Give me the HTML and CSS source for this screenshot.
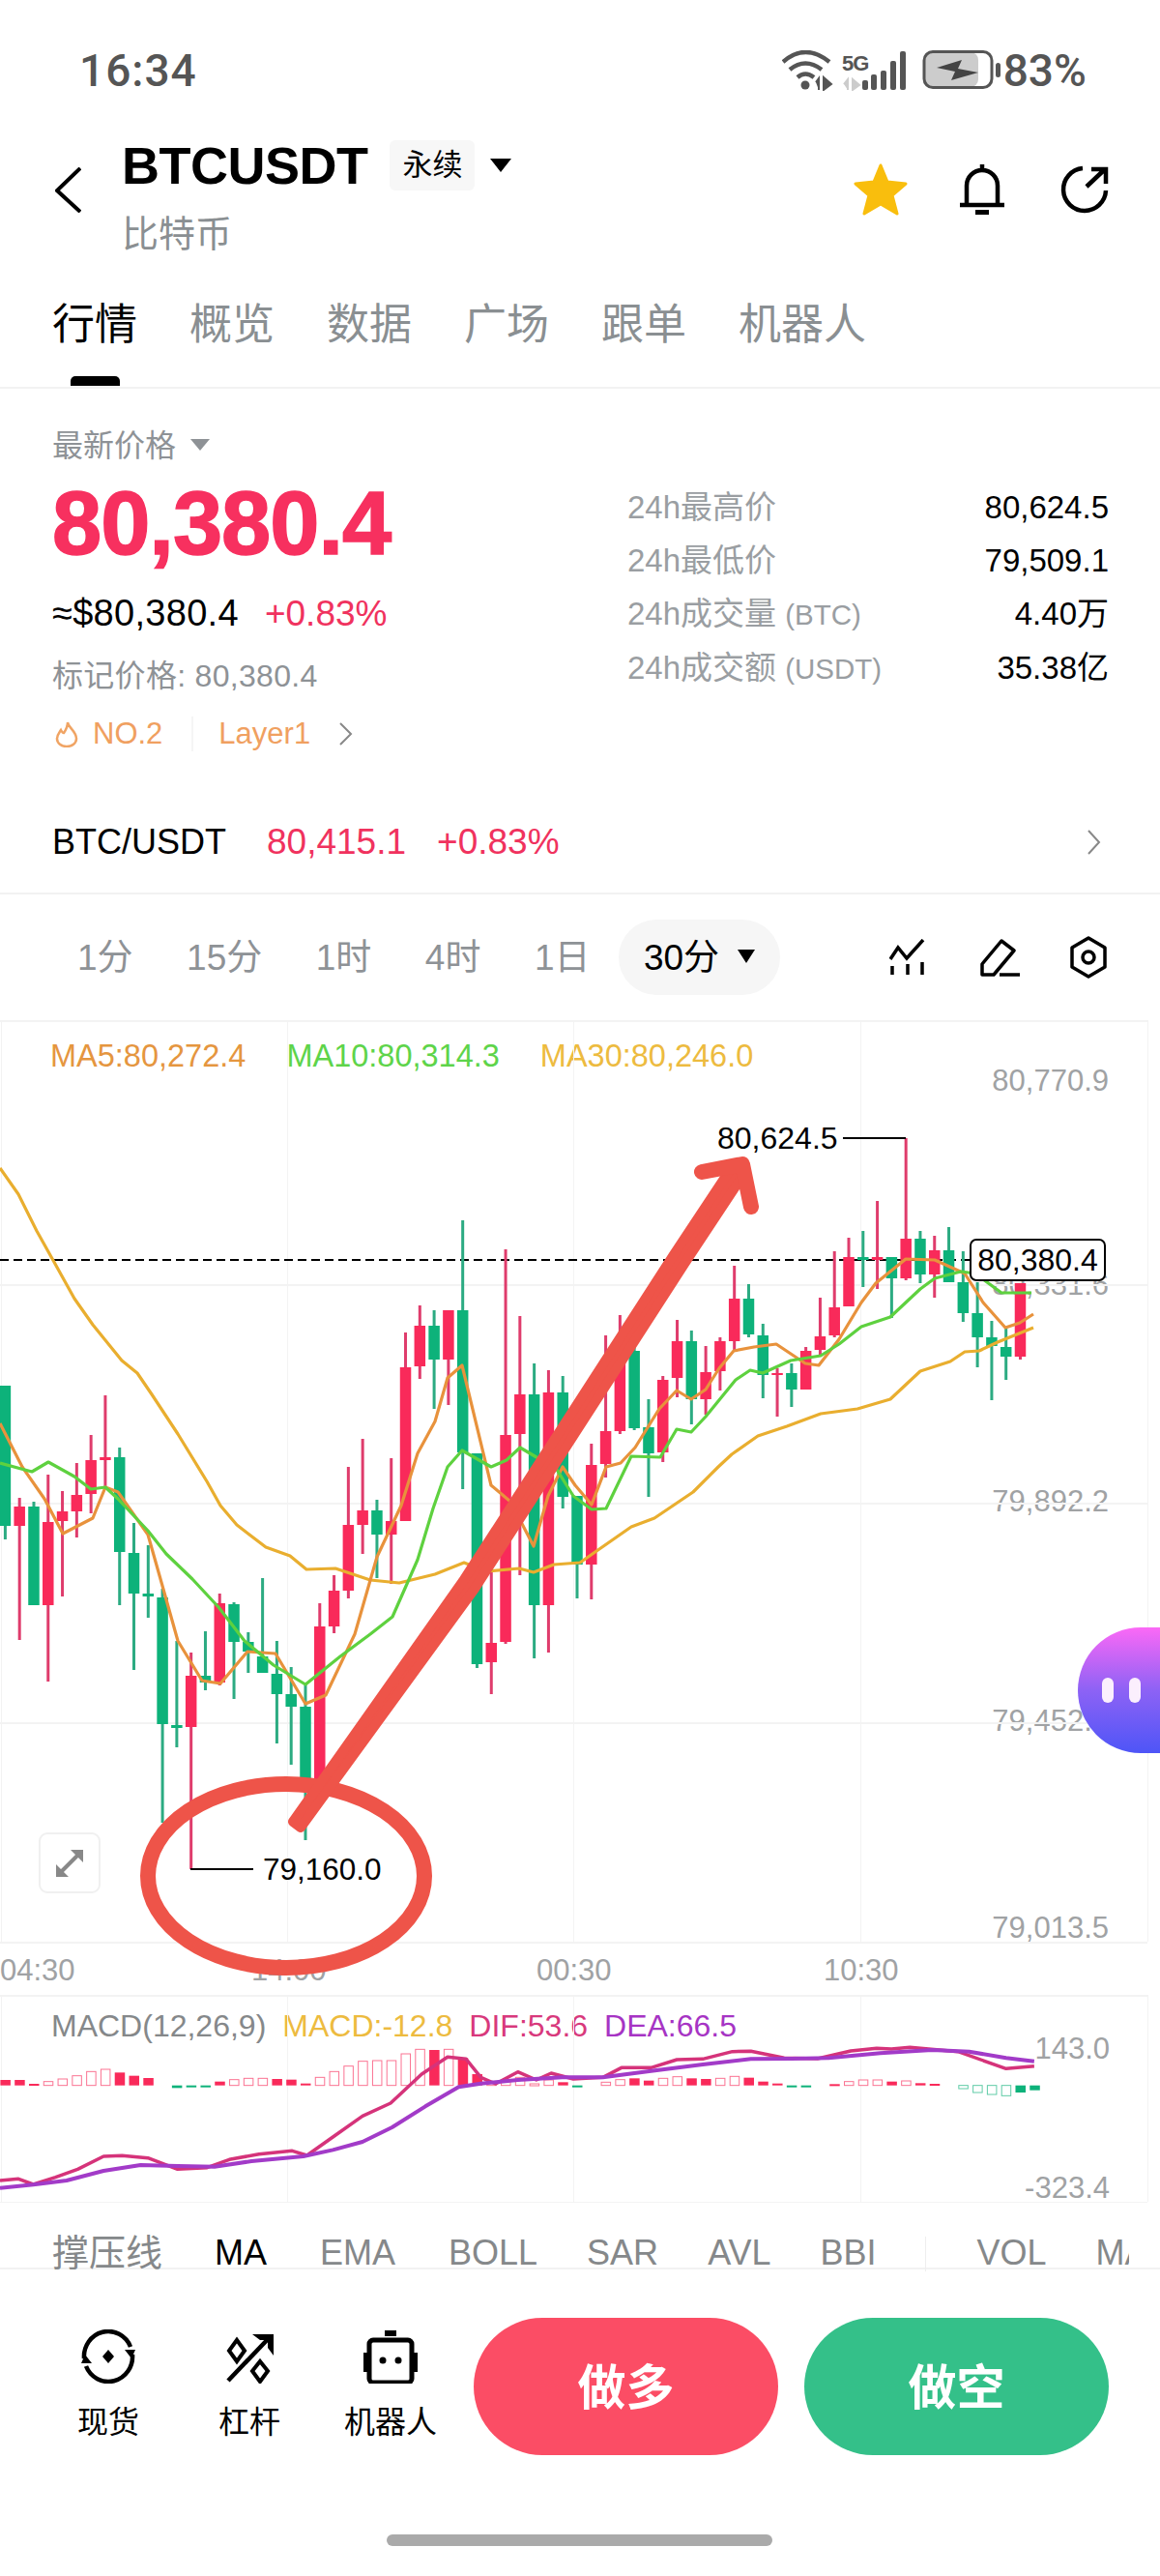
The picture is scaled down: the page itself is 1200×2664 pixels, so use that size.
FILE: index.html
```html
<!DOCTYPE html>
<html lang="zh-CN">
<head>
    <meta charset="UTF-8">
    <meta name="viewport" content="width=device-width, initial-scale=1.0">
    <title>BTCUSDT</title>
    <link rel="stylesheet" href="styles.css">
</head>
<body>
    <div class="status-bar">
        <span class="clock">16:34</span>
        <svg class="status-icons" width="228" height="42" viewBox="807 52 228 42">
            <g fill="none" stroke="#555" stroke-width="4.5">
                <path d="M808 64 Q831 44 856 64"/>
                <path d="M815 72 Q831 59 848 72"/>
                <path d="M823 80 Q831 73 840 80"/>
            </g>
            <circle cx="831" cy="88" r="4.5" fill="#555"/>
            <path d="M845 93V81l-3 4M850 80v13l8-6z" fill="#555" stroke="#555" stroke-width="2"/>
            <text class="net-label" x="869" y="73">5G</text>
            <path d="M875 93V82l-4 5M880 82v11l7-5z" fill="#ccc" stroke="#ccc" stroke-width="2"/>
            <g fill="#555">
                <rect x="890" y="83" width="6" height="10" rx="2"/>
                <rect x="899" y="77" width="6" height="16" rx="2"/>
                <rect x="909" y="73" width="6" height="20" rx="2"/>
                <rect x="919" y="63" width="6" height="30" rx="2"/>
                <rect x="929" y="53" width="6" height="40" rx="2"/>
            </g>
            <rect x="955" y="54" width="55" height="36" rx="8" fill="#ccc"/>
            <rect x="954" y="53.500" width="70" height="37" rx="9" fill="none" stroke="#555" stroke-width="3"/>
            <path d="M967 70 L993 62 L989 71 L1010 75 L982 83 L986 74z" fill="#444"/>
            <rect x="1028" y="65" width="5" height="15" rx="2.500" fill="#555"/>
        </svg>
        <span class="battery-pct">83%</span>
    </div>

    <header class="coin-head">
        <svg class="back-icon" width="27" height="47" viewBox="0 0 27 47">
            <path d="M26 1 L2 24 L26 46" fill="none" stroke="#000" stroke-width="4"/>
        </svg>
        <div class="coin-title">
            <div class="coin-name-row">
                <h1>BTCUSDT</h1>
                <span class="coin-badge">永续</span>
                <span class="caret caret-black"></span>
            </div>
            <div class="coin-sub">比特币</div>
        </div>
        <div class="head-actions">
            <svg class="head-star" width="56" height="56" viewBox="0 0 56 56">
                <path d="M28 3 L35 20 L54 22 L40 34 L45 53 L28 43 L11 53 L16 34 L2 22 L21 20z" fill="#f9be0d" stroke="#f9be0d" stroke-width="3" stroke-linejoin="round"/>
            </svg>
            <svg width="48" height="54" viewBox="0 0 48 54">
                <path d="M24 1v6M8 43V23a16 16 0 0 1 32 0v20M1 43h46" fill="none" stroke="#000" stroke-width="4.500"/>
                <rect x="17" y="48" width="14" height="5" fill="#000"/>
            </svg>
            <svg width="50" height="50" viewBox="0 0 50 50">
                <path d="M23 3A22 22 0 1 0 47 26" fill="none" stroke="#000" stroke-width="4.500"/>
                <path d="M27 22 L45 5M32 4H47V19" fill="none" stroke="#000" stroke-width="4.500"/>
            </svg>
        </div>
    </header>

    <nav class="tabs">
        <div class="tab tab-active">行情<i class="tab-mark"></i></div>
        <div class="tab">概览</div>
        <div class="tab">数据</div>
        <div class="tab">广场</div>
        <div class="tab">跟单</div>
        <div class="tab">机器人</div>
    </nav>

    <section class="price-panel">
        <div class="price-main">
            <div class="price-label">最新价格 <span class="caret caret-gray"></span></div>
            <div class="price-big">80,380.4</div>
            <div class="price-fiat">≈$80,380.4<span class="rise">+0.83%</span></div>
            <div class="price-mark">标记价格: 80,380.4</div>
            <div class="price-tags">
                <svg width="24" height="28" viewBox="0 0 24 28">
                    <path d="M13 2c1 6 9 9 9 17a10 8 0 0 1-20 0c0-4 2-6 4-9 1 2 2 3 3 3 2-3 4-7 4-11z" fill="none" stroke="#f0a464" stroke-width="2.500"/>
                </svg>
                <span class="tag-rank">NO.2</span>
                <span class="tag-name">Layer1</span>
                <svg width="15" height="24" viewBox="0 0 15 24">
                    <path d="M2 1 L13 12 L2 23" fill="none" stroke="#888" stroke-width="2"/>
                </svg>
            </div>
        </div>
        <dl class="stats">
            <div class="stat"><dt>24h最高价</dt><dd>80,624.5</dd></div>
            <div class="stat"><dt>24h最低价</dt><dd>79,509.1</dd></div>
            <div class="stat"><dt>24h成交量 <span class="stat-unit">(BTC)</span></dt><dd>4.40万</dd></div>
            <div class="stat"><dt>24h成交额 <span class="stat-unit">(USDT)</span></dt><dd>35.38亿</dd></div>
        </dl>
    </section>

    <div class="spot-row">
        <span class="spot-name">BTC/USDT</span>
        <span class="spot-price">80,415.1</span>
        <span class="spot-change">+0.83%</span>
        <svg class="spot-more" width="15" height="26" viewBox="0 0 15 26">
            <path d="M2 1 L13 13 L2 25" fill="none" stroke="#888" stroke-width="2"/>
        </svg>
    </div>

    <div class="intervals">
        <span>1分</span>
        <span>15分</span>
        <span>1时</span>
        <span>4时</span>
        <span>1日</span>
        <span class="interval-pill">30分<i class="caret caret-black caret-small"></i></span>
        <div class="chart-tools">
            <svg class="tool-first" width="38" height="38" viewBox="0 0 38 38">
                <path d="M1 21 L9 9 L18 20 L35 1" fill="none" stroke="#000" stroke-width="3.500"/>
                <path d="M3 28v9M19 26v11M34 24v13" fill="none" stroke="#000" stroke-width="3.500"/>
            </svg>
            <svg width="42" height="40" viewBox="0 0 42 40">
                <path d="M2 38V27L22 3 L35 13 L14 38z" fill="none" stroke="#000" stroke-width="3.500" stroke-linejoin="round"/>
                <path d="M20 38H41" fill="none" stroke="#000" stroke-width="3.500"/>
            </svg>
            <svg width="40" height="44" viewBox="0 0 40 44">
                <path d="M20 2 L37 12V32 L20 42 L3 32V12z" fill="none" stroke="#000" stroke-width="3.500" stroke-linejoin="round"/>
                <circle cx="20" cy="22" r="6" fill="none" stroke="#000" stroke-width="3.500"/>
            </svg>
        </div>
    </div>

    <section class="kline">
        <div class="ma-legend">
            <span class="ma5">MA5:80,272.4</span>
            <span class="ma10">MA10:80,314.3</span>
            <span class="ma30">MA30:80,246.0</span>
        </div>
        <span class="axis-price axis-p1">80,770.9</span>
        <span class="axis-price axis-p2">80,331.6</span>
        <span class="axis-price axis-p3">79,892.2</span>
        <span class="axis-price axis-p4">79,452.8</span>
        <span class="axis-price axis-p5">79,013.5</span>
        <span class="axis-time axis-t1">04:30</span>
        <span class="axis-time axis-t2">14:00</span>
        <span class="axis-time axis-t3">00:30</span>
        <span class="axis-time axis-t4">10:30</span>

        <svg id="kline-chart" class="chart-svg" width="1200" height="1008" viewBox="0 1055 1200 1008">
            <g id="kline-grid"></g>
            <path d="M0 1303H1004" stroke="#000" stroke-width="2" stroke-dasharray="9 5"/>
            <g id="kline-candles"></g>
            <g id="kline-ma"></g>
            <path d="M872 1177H937M197 1933H262" fill="none" stroke="#000" stroke-width="2"/>
            <g class="markup">
                <ellipse cx="296" cy="1940" rx="143" ry="95" stroke-width="16"/>
                <path class="markup-shaft" d="M311 1890 L491 1643 L708 1307 L771 1212 L759 1204 L696 1299 L479 1635 L303 1884z" stroke-width="10"/>
                <path d="M726 1212 L768 1204 L777 1248" stroke-width="16"/>
            </g>
        </svg>

        <span class="extreme extreme-high">80,624.5</span>
        <span class="extreme extreme-low">79,160.0</span>
        <span class="last-price">80,380.4</span>
        <div class="expand-btn">
            <svg width="32" height="32" viewBox="0 0 32 32">
                <path d="M2 30V17l13 13zM30 2V15L17 2z" fill="#888"/>
                <path d="M8 24 L24 8" stroke="#888" stroke-width="4"/>
            </svg>
        </div>
        <div class="assistant"><i></i><i></i></div>
    </section>

    <section class="macd">
        <div class="macd-legend">
            <span class="macd-name">MACD(12,26,9)</span>
            <span class="macd-val">MACD:-12.8</span>
            <span class="macd-dif">DIF:53.6</span>
            <span class="macd-dea">DEA:66.5</span>
        </div>
        <svg id="macd-chart" class="chart-svg" width="1200" height="215" viewBox="0 2063 1200 215"></svg>
        <span class="axis-price axis-m1">143.0</span>
        <span class="axis-price axis-m2">-323.4</span>
    </section>

    <nav class="indicators">
        <span class="ind ind-cjk">撑压线</span>
        <span class="ind ind-on ind-ma">MA</span>
        <span class="ind ind-wide">EMA</span>
        <span class="ind ind-wide">BOLL</span>
        <span class="ind">SAR</span>
        <span class="ind">AVL</span>
        <span class="ind">BBI</span>
        <i class="ind-split"></i>
        <span class="ind">VOL</span>
        <span class="ind">MACD</span>
    </nav>

    <footer class="actions">
        <div class="action">
            <svg width="56" height="56" viewBox="0 0 56 56">
                <path d="M3 30A25 26 0 0 1 51 18M53 26A25 26 0 0 1 5 38" fill="none" stroke="#000" stroke-width="4.500"/>
                <path d="M45 21H56L52 30zM11 35H0L4 26z" fill="#000"/>
                <path d="M28 21 L34 28 L28 35 L22 28z" fill="#000"/>
            </svg>
            <span>现货</span>
        </div>
        <div class="action">
            <svg width="56" height="56" viewBox="0 0 56 56">
                <path d="M6 53 L50 7" fill="none" stroke="#000" stroke-width="4.500"/>
                <path d="M31 5H53V27L47 19V11H39z" fill="#000"/>
                <path d="M15 11 L23 22 L15 33 L7 22z M39 33 L47 43 L39 54 L31 43z" fill="none" stroke="#000" stroke-width="4"/>
            </svg>
            <span>杠杆</span>
        </div>
        <div class="action">
            <svg width="56" height="56" viewBox="0 0 56 56">
                <rect x="22" y="1" width="12" height="6" fill="#000"/>
                <rect x="6" y="11" width="44" height="44" rx="4" fill="none" stroke="#000" stroke-width="5"/>
                <path d="M2 24v20M54 24v20" stroke="#000" stroke-width="4"/>
                <circle cx="20" cy="32" r="3.500" fill="#000"/>
                <circle cx="36" cy="32" r="3.500" fill="#000"/>
            </svg>
            <span>机器人</span>
        </div>
        <button class="trade trade-long">做多</button>
        <button class="trade trade-short">做空</button>
    </footer>

    <div class="home-bar"></div>

    <script src="chart.js"></script>
</body>
</html>
```
FILE: styles.css
```css
body {
    margin: 0;
    width: 1200px;
    height: 2664px;
    overflow: hidden;
    background-color: #fff;
    color: #000;
    font-family: "Liberation Sans", "Noto Sans CJK SC", sans-serif;
}

.caret {
    display: inline-block;
    width: 0;
    height: 0;
    border-style: solid;
    border-color: transparent;
    border-bottom-width: 0;
}

.caret-black {
    border-width: 14px 11px 0;
    border-top-color: #000;
}

.caret-gray {
    border-width: 12px 10px 0;
    border-top-color: #8e9296;
}

.caret-small {
    border-width: 14px 9px 0;
    margin-left: 19px;
}

/* status bar */
.status-bar {
    height: 130px;
    box-sizing: border-box;
    padding: 51px 0 0 82px;
    display: flex;
    align-items: flex-start;
    color: #555;
}

.clock {
    font-family: Roboto, sans-serif;
    font-size: 46px;
    line-height: 44px;
    font-weight: 500;
    letter-spacing: 1px;
}

.status-icons {
    margin: 1px 0 0 605px;
}

.net-label {
    font-size: 22px;
    font-weight: bold;
    fill: #555;
    letter-spacing: -1px;
}

.battery-pct {
    font-family: Roboto, sans-serif;
    font-size: 46px;
    line-height: 44px;
    font-weight: 500;
    margin-left: 1px;
}

/* coin header */
.coin-head {
    height: 170px;
    box-sizing: border-box;
    padding: 15px 53px 0 57px;
    display: flex;
    align-items: flex-start;
}

.back-icon {
    margin: 28px 42px 0 0;
}

.coin-name-row {
    display: flex;
    align-items: center;
    height: 52px;
}

h1 {
    margin: 0;
    font-size: 54px;
    line-height: 52px;
    font-weight: bold;
    letter-spacing: -0.5px;
}

.coin-badge {
    margin-left: 23px;
    padding: 0 13px;
    height: 52px;
    line-height: 52px;
    font-size: 31px;
    background-color: #f7f7f7;
    border-radius: 6px;
}

.coin-name-row .caret {
    margin: 0 0 0 16px;
}

.coin-sub {
    margin-top: 25px;
    font-size: 38px;
    line-height: 40px;
    color: #8a8f92;
}

.head-actions {
    margin-left: auto;
    display: flex;
    align-items: center;
    gap: 57px;
    padding-top: 23px;
}

.head-star {
    margin-right: -4px;
}

/* tabs */
.tabs {
    height: 102px;
    box-sizing: border-box;
    padding: 14px 0 0 54px;
    display: flex;
    align-items: flex-start;
    gap: 54px;
    border-bottom: 2px solid #f2f2f2;
    font-size: 44px;
    line-height: 44px;
    color: #8a8f92;
}

.tab-active {
    color: #000;
    display: flex;
    flex-direction: column;
    align-items: center;
    gap: 31px;
}

.tab-mark {
    display: block;
    width: 51px;
    height: 10px;
    border-radius: 5px 5px 0 0;
    background-color: #000;
}

/* price block */
.price-panel {
    height: 417px;
    box-sizing: border-box;
    padding: 41px 53px 0 54px;
    display: flex;
    justify-content: space-between;
}

.price-main {
    width: 595px;
}

.price-label {
    font-size: 32px;
    line-height: 36px;
    color: #8e9296;
}

.price-label .caret {
    margin-left: 6px;
    vertical-align: 6px;
}

.price-big {
    margin-top: 16px;
    font-size: 92px;
    line-height: 92px;
    font-weight: bold;
    letter-spacing: -1px;
    color: #f7305f;
    -webkit-text-stroke: 1.5px #f7305f;
}

.price-fiat {
    margin-top: 25px;
    font-size: 38px;
    line-height: 44px;
    letter-spacing: 0.3px;
}

.rise {
    margin-left: 27px;
    font-size: 37px;
    letter-spacing: 0;
    color: #f0325e;
}

.price-mark {
    margin-top: 22px;
    font-size: 32px;
    line-height: 40px;
    letter-spacing: 0.3px;
    color: #8e9296;
}

.price-tags {
    margin-top: 20px;
    height: 40px;
    display: flex;
    align-items: center;
    font-size: 31px;
    color: #f0a060;
}

.price-tags svg {
    margin-left: 3px;
}

.tag-rank {
    margin-left: 15px;
    padding-right: 30px;
    border-right: 2px solid #f5f5f5;
}

.tag-name {
    margin: 0 26px 0 26px;
}

.stats {
    margin: 54px 0 0;
    width: 498px;
    font-size: 33px;
    line-height: 55px;
}

.stat {
    display: flex;
    justify-content: space-between;
}

.stat dt {
    color: #9a9ea2;
}

.stat-unit {
    font-size: 29.5px;
}

.stat dd {
    margin: 0;
}

/* spot row */
.spot-row {
    height: 106px;
    box-sizing: border-box;
    padding: 0 61px 0 54px;
    display: flex;
    align-items: center;
    border-bottom: 2px solid #f2f2f2;
    font-size: 37px;
    color: #f0325e;
}

.spot-name {
    font-size: 36px;
    color: #000;
    margin-right: 42px;
}

.spot-change {
    margin-left: 32px;
}

.spot-more {
    margin-left: auto;
}

/* interval row */
.intervals {
    height: 130px;
    box-sizing: border-box;
    padding: 0 54px 0 80px;
    display: flex;
    align-items: center;
    gap: 55.500px;
    font-size: 37px;
    color: #8e9296;
}

.intervals span {
    padding-bottom: 6px;
}

.interval-pill {
    margin-left: -26px;
    width: 167px;
    height: 78px;
    box-sizing: border-box;
    padding-left: 26px;
    display: flex;
    align-items: center;
    color: #000;
    background-color: #f6f6f6;
    border-radius: 39px;
}

.interval-pill .caret {
    margin-top: 4px;
}

.chart-tools {
    margin-left: auto;
    display: flex;
    align-items: center;
    gap: 50px;
}

.tool-first {
    margin-right: 6px;
}

/* main chart */
.kline {
    position: relative;
    height: 1008px;
    overflow: hidden;
    font-size: 32px;
    line-height: 36px;
}

.chart-svg {
    position: absolute;
    left: 0;
    top: 0;
}

.ma-legend {
    position: absolute;
    left: 52px;
    top: 19px;
    display: flex;
    gap: 42px;
    font-size: 32.500px;
}

.ma5 { color: #e5963f; }
.ma10 { color: #5ed44a; }
.ma30 { color: #edbb3f; }

.axis-price {
    position: absolute;
    right: 53px;
    font-size: 31px;
    line-height: 36px;
    color: #a0a2a4;
}

.axis-p1 { top: 45px; }
.axis-p2 { top: 256px; }
.axis-p3 { top: 480px; }
.axis-p4 { top: 707px; }
.axis-p5 { top: 921px; }

.axis-time {
    position: absolute;
    top: 965px;
    font-size: 31px;
    color: #a0a2a4;
}

.axis-t1 { left: 0; }
.axis-t2 { left: 260px; }
.axis-t3 { left: 555px; }
.axis-t4 { left: 852px; }

.markup {
    fill: none;
    stroke: #ee5449;
    stroke-linecap: round;
    stroke-linejoin: round;
}

.markup-shaft {
    fill: #ee5449;
}

.extreme {
    position: absolute;
}

.extreme-high {
    left: 742px;
    top: 104px;
}

.extreme-low {
    left: 272px;
    top: 860px;
    font-size: 31.500px;
}

.last-price {
    position: absolute;
    left: 1003px;
    top: 226px;
    width: 141px;
    height: 44px;
    box-sizing: border-box;
    border: 2px solid #000;
    border-radius: 7px;
    background-color: #fff;
    font-size: 32px;
    line-height: 40px;
    text-align: center;
}

.expand-btn {
    position: absolute;
    left: 40px;
    top: 840px;
    width: 64px;
    height: 63px;
    box-sizing: border-box;
    border: 2px solid #f0f0f0;
    border-radius: 9px;
    background-color: #fff;
    display: flex;
    align-items: center;
    justify-content: center;
}

.assistant {
    position: absolute;
    left: 1115px;
    top: 628px;
    width: 85px;
    height: 130px;
    box-sizing: border-box;
    padding-left: 25px;
    display: flex;
    align-items: center;
    gap: 16px;
    border-radius: 65px 0 0 65px;
    background: linear-gradient(#fb69f6, #8d62f5 50%, #4e55f7);
}

.assistant i {
    width: 12px;
    height: 26px;
    border-radius: 6px;
    background-color: #fbeffd;
}

/* macd */
.macd {
    position: relative;
    height: 215px;
    box-sizing: border-box;
}

.macd-legend {
    position: absolute;
    left: 53px;
    top: 14px;
    display: flex;
    gap: 17px;
    font-size: 32px;
    line-height: 36px;
}

.macd-name { color: #85888a; }
.macd-val { color: #edbb3f; }
.macd-dif { color: #d8397c; }
.macd-dea { color: #a634c4; }

.axis-m1 {
    top: 38px;
    right: 52px;
}

.axis-m2 {
    top: 182px;
    right: 52px;
}

/* indicator tabs */
.indicators {
    height: 71px;
    box-sizing: border-box;
    width: 1168px;
    overflow: hidden;
    padding-left: 54px;
    display: flex;
    align-items: flex-end;
    font-size: 36px;
    line-height: 38px;
    color: #85888a;
    white-space: nowrap;
}

.ind {
    margin-left: 51px;
}

.ind-ma {
    margin-left: 54px;
}

.ind-wide {
    margin-left: 55px;
}

.ind-cjk {
    margin-left: 0;
    font-size: 38px;
}

.ind-on {
    color: #000;
}

.ind-split {
    flex: none;
    width: 1px;
    height: 36px;
    margin-left: 50px;
    margin-right: -1px;
    background-color: #eee;
}

.ind-split + .ind {
    margin-left: 54px;
}

/* bottom actions */
.actions {
    height: 276px;
    margin-top: -4px;
    box-sizing: border-box;
    padding: 50px 52px 0 39px;
    display: flex;
    align-items: flex-start;
    border-top: 2px solid #f2f2f2;
}

.action {
    width: 146px;
    padding-top: 12px;
    display: flex;
    flex-direction: column;
    align-items: center;
    gap: 20px;
    font-size: 32px;
    line-height: 40px;
}

.trade {
    width: 315px;
    height: 142px;
    padding: 0 0 6px;
    border: none;
    border-radius: 71px;
    color: #fff;
    font-family: inherit;
    font-size: 50px;
    font-weight: bold;
    letter-spacing: 0;
}

.trade-long {
    margin-left: 13px;
    background-color: #fb4d65;
}

.trade-short {
    margin-left: 27px;
    background-color: #34c089;
}

.home-bar {
    width: 399px;
    height: 12px;
    margin-left: 400px;
    border-radius: 6px;
    background-color: #aaa;
}
```
FILE: chart.js
```js
var SVG_NS = 'http://www.w3.org/2000/svg';
var RED = '#f92a5a', GREEN = '#0db27a';
var WICK_RED = '#df3c6c', WICK_GREEN = '#2cab82';

function add(parent, tag, attrs) {
    var el = document.createElementNS(SVG_NS, tag);
    for (var key in attrs) el.setAttribute(key, attrs[key]);
    parent.appendChild(el);
    return el;
}

function barX(i) {
    return 5.4 + 14.79 * i;
}

// colour, wick top, wick bottom, body top, body bottom
var candles = [
    ['g',1433,1592,1433,1578], ['r',1549,1696,1558,1578], ['g',1553,1660,1558,1660], ['r',1525,1739,1574,1660],
    ['r',1542,1651,1563,1573], ['r',1513,1590,1546,1563], ['r',1484,1565,1510,1545], ['r',1443,1537,1507,1510],
    ['g',1497,1660,1507,1605], ['g',1575,1727,1606,1648], ['g',1598,1673,1648,1651], ['g',1643,1885,1652,1783],
    ['g',1697,1807,1784,1787], ['r',1709,1933,1733,1786], ['g',1687,1748,1733,1740], ['r',1648,1743,1658,1740],
    ['g',1657,1757,1659,1698], ['g',1688,1730,1698,1708], ['g',1632,1730,1713,1730], ['g',1697,1803,1731,1752],
    ['g',1724,1825,1752,1765], ['g',1740,1903,1765,1850], ['r',1658,1843,1682,1843], ['r',1629,1689,1645,1682],
    ['r',1517,1653,1577,1645], ['r',1488,1607,1562,1577], ['g',1551,1632,1562,1587], ['r',1508,1638,1573,1587],
    ['r',1378,1573,1414,1573], ['r',1350,1426,1371,1413], ['g',1355,1457,1371,1406], ['r',1355,1453,1355,1406],
    ['g',1262,1540,1355,1502], ['g',1503,1725,1503,1721], ['r',1607,1752,1699,1719], ['r',1292,1700,1484,1698],
    ['r',1361,1629,1442,1483], ['g',1410,1715,1442,1660], ['r',1417,1709,1440,1660], ['g',1423,1560,1440,1548],
    ['g',1547,1653,1547,1618], ['r',1493,1654,1515,1618], ['r',1381,1528,1480,1514], ['r',1360,1483,1400,1480],
    ['g',1380,1479,1397,1477], ['g',1447,1548,1476,1503], ['r',1423,1512,1427,1502], ['r',1365,1445,1387,1425],
    ['g',1376,1473,1387,1447], ['r',1392,1463,1419,1447], ['r',1383,1438,1387,1418], ['r',1309,1397,1343,1387],
    ['g',1328,1383,1343,1380], ['g',1369,1446,1381,1422], ['r',1415,1465,1420,1422], ['g',1410,1455,1420,1437],
    ['r',1393,1437,1397,1437], ['r',1342,1403,1382,1396], ['r',1294,1383,1352,1381], ['r',1280,1351,1300,1351],
    ['g',1273,1331,1300,1303], ['r',1242,1333,1300,1303], ['g',1300,1363,1300,1322], ['r',1177,1324,1281,1322],
    ['g',1273,1327,1281,1318], ['r',1278,1342,1293,1318], ['g',1269,1326,1293,1326], ['g',1294,1367,1326,1358],
    ['g',1326,1414,1358,1383], ['g',1366,1448,1383,1392], ['g',1373,1427,1393,1403], ['r',1327,1406,1327,1403]
];

var ma30 = [[0,1208],[19,1235],[38,1273],[57,1307],[77,1343],[96,1370],[126,1407],[142,1420],[157,1442],[184,1483],[214,1532],[228,1557],[245,1577],[275,1600],[300,1609],[317,1623],[347,1622],[383,1634],[413,1637],[450,1628],[480,1616],[503,1625],[537,1622],[552,1626],[573,1618],[600,1616],[620,1602],[653,1579],[677,1570],[717,1543],[743,1517],[757,1504],[784,1485],[814,1475],[849,1462],[887,1457],[921,1447],[952,1418],[983,1408],[998,1398],[1013,1397],[1032,1388],[1069,1373]];
var ma5 = [[0,1472],[23,1517],[46,1550],[65,1586],[96,1570],[109,1538],[122,1543],[153,1587],[168,1640],[184,1697],[209,1738],[228,1741],[256,1708],[285,1710],[316,1762],[337,1753],[367,1690],[390,1610],[415,1557],[432,1503],[450,1470],[463,1425],[478,1412],[508,1536],[527,1552],[537,1570],[552,1599],[567,1547],[582,1517],[595,1536],[612,1556],[627,1517],[642,1513],[657,1497],[682,1457],[700,1438],[715,1447],[730,1437],[744,1415],[759,1397],[780,1393],[803,1390],[833,1410],[847,1412],[868,1385],[891,1347],[906,1327],[937,1302],[967,1303],[998,1317],[1017,1347],[1040,1373],[1055,1368],[1069,1359]];
var ma10 = [[0,1513],[33,1522],[50,1512],[77,1527],[94,1540],[109,1538],[122,1550],[153,1583],[172,1607],[199,1633],[226,1662],[253,1697],[283,1722],[316,1742],[352,1713],[383,1690],[406,1672],[432,1613],[448,1560],[463,1517],[478,1500],[508,1517],[524,1510],[538,1497],[555,1507],[573,1515],[593,1547],[612,1561],[627,1560],[653,1506],[683,1507],[700,1478],[715,1481],[730,1465],[761,1427],[776,1417],[789,1420],[818,1407],[849,1402],[868,1390],[891,1372],[921,1362],[952,1333],[967,1322],[994,1315],[1009,1317],[1036,1337],[1067,1337]];

function polyline(parent, points, color, width) {
    add(parent, 'polyline', {
        points: points.join(' '),
        fill: 'none',
        stroke: color,
        'stroke-width': width,
        'stroke-linejoin': 'round'
    });
}

function drawGrid(parent, verticalTop, verticalBottom, rows) {
    [1, 297, 593, 890, 1187].forEach(function(x) {
        add(parent, 'rect', { x: x, y: verticalTop, width: 1, height: verticalBottom - verticalTop, fill: '#f3f3f3' });
    });
    rows.forEach(function(y) {
        add(parent, 'rect', { x: 0, y: y, width: 1187, height: 2, fill: '#f3f3f3' });
    });
}

function drawKline() {
    drawGrid(document.getElementById('kline-grid'), 1055, 2008, [1055, 1328, 1554, 1781, 2008]);

    var group = document.getElementById('kline-candles');
    candles.forEach(function(c, i) {
        var x = barX(i);
        add(group, 'rect', { x: x - 1.5, y: c[1], width: 3, height: c[2] - c[1], fill: c[0] == 'r' ? WICK_RED : WICK_GREEN });
        add(group, 'rect', { x: x - 5.75, y: c[3], width: 11.5, height: Math.max(c[4] - c[3], 2), fill: c[0] == 'r' ? RED : GREEN });
    });

    var lines = document.getElementById('kline-ma');
    polyline(lines, ma30, '#e9ae2f', 3.2);
    polyline(lines, ma5, '#e8923c', 3.2);
    polyline(lines, ma10, '#5ed13f', 3.2);
}

// macd readings: x on a 1568 wide scale, y in thirds of a pixel below 2040
function macdPoint(p) {
    return [p[0] / 1.3067, 2040 + p[1] / 3];
}

// f = filled red, h = hollow red, g = filled green, o = hollow green
var histogram = [
    [0,333,'f'],[1,333,'f'],[2,345,'f'],[3,338,'h'],[4,330,'h'],[5,320,'h'],[6,307,'h'],[7,300,'h'],[8,310,'f'],[9,320,'f'],[10,327,'f'],
    [12,358,'g'],[13,355,'g'],[14,353,'g'],[15,338,'f'],[16,332,'h'],[17,328,'h'],[18,328,'h'],[19,330,'f'],[20,332,'f'],[21,344,'f'],
    [22,325,'h'],[23,307,'h'],[24,290,'h'],[25,275,'h'],[26,273,'h'],[27,273,'h'],[28,252,'h'],[29,238,'h'],[30,240,'f'],[31,238,'h'],
    [32,265,'f'],[33,315,'f'],[34,340,'h'],[35,335,'h'],[36,325,'h'],[37,345,'h'],[38,333,'h'],[39,340,'f'],[40,353,'g'],
    [42,340,'h'],[43,332,'h'],[44,328,'f'],[45,335,'f'],[46,328,'h'],[47,323,'h'],[48,328,'f'],[49,330,'f'],[50,328,'h'],[51,322,'h'],
    [52,326,'f'],[53,338,'f'],[54,344,'f'],[55,353,'g'],[56,353,'g'],[58,346,'f'],[59,338,'h'],[60,333,'h'],[61,333,'h'],[62,338,'f'],
    [63,336,'h'],[64,343,'f'],[65,345,'f'],[67,360,'o'],[68,372,'o'],[69,378,'o'],[70,382,'o'],[71,372,'g'],[72,365,'g']
];

var dif = [[0,645],[25,640],[45,657],[75,635],[105,610],[140,570],[165,568],[200,575],[240,610],[280,605],[310,580],[350,563],[395,553],[415,567],[450,510],[490,445],[528,405],[570,315],[605,262],[630,268],[650,325],[670,345],[700,308],[725,333],[745,312],[775,330],[815,325],[840,295],[880,295],[915,270],[950,268],[990,245],[1015,244],[1060,265],[1105,267],[1150,243],[1185,235],[1205,237],[1230,232],[1270,240],[1295,245],[1360,298],[1398,290]];
var dea = [[0,668],[45,658],[90,645],[140,615],[190,597],[240,600],[290,602],[340,585],[410,570],[450,550],[490,525],[530,480],[575,415],[620,355],[650,344],[700,333],[760,325],[815,325],[880,305],[950,285],[1015,268],[1070,267],[1120,265],[1190,250],[1260,240],[1310,245],[1360,265],[1398,275]];

function drawMacd() {
    var svg = document.getElementById('macd-chart');
    drawGrid(svg, 2063, 2277, [2063, 2277]);

    var zero = 2040 + 350 / 3;
    histogram.forEach(function(b) {
        var x = barX(b[0]) - 5;
        var end = 2040 + b[1] / 3;
        var top = Math.min(end, zero);
        var height = Math.max(Math.abs(end - zero), 2);
        var hollow = b[2] == 'h' || b[2] == 'o';
        var color = (b[2] == 'f' || b[2] == 'h') ? RED : GREEN;
        if (hollow) {
            add(svg, 'rect', { x: x + 0.5, y: top, width: 9.5, height: height, fill: '#fff', stroke: color, 'stroke-width': 1, opacity: 0.65 });
        } else {
            add(svg, 'rect', { x: x, y: top, width: 10.5, height: height, fill: color });
        }
    });

    polyline(svg, dif.map(macdPoint), '#d5337a', 3.5);
    polyline(svg, dea.map(macdPoint), '#a23bc8', 4);
}

drawKline();
drawMacd();
```
